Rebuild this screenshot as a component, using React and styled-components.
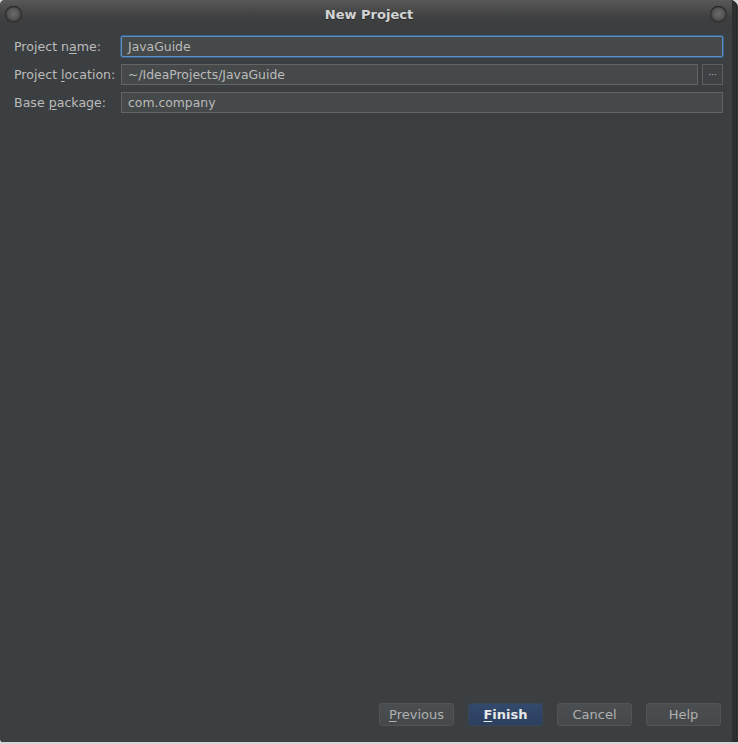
import React from 'react';
import styled, { createGlobalStyle } from 'styled-components';

const GlobalStyle = createGlobalStyle`
  html, body {
    margin: 0;
    padding: 0;
    background: #d6d6d6;
  }
  body {
    font-family: "DejaVu Sans", "Liberation Sans", sans-serif;
  }
`;

const Window = styled.div`
  width: 736px;
  height: 742px;
  background: #3c3f41;
  border-radius: 5px 5px 3px 3px;
  box-shadow: 1px 1px 0 #2a2a2a, 2px 2px 0 #333;
  display: flex;
  flex-direction: column;
  overflow: hidden;
  border-right: 4px solid #2d2f30;
  box-sizing: border-box;
`;

const TitleBar = styled.div`
  height: 28px;
  flex: none;
  display: flex;
  align-items: center;
  justify-content: space-between;
  padding: 0 5px;
  background: linear-gradient(#585858, #3f4041 60%, #3b3c3d);
  box-sizing: border-box;
`;

const Title = styled.div`
  color: #d4d4d4;
  font-size: 13px;
  font-weight: bold;
  text-shadow: 0 1px 0 #2a2a2a;
  margin-left: 6px;
`;

const Knob = styled.div`
  width: 17px;
  height: 17px;
  border-radius: 50%;
  background: radial-gradient(circle at 50% 45%, #6a6a6a 0, #555 45%, #3a3a3a 60%, #2e2e2e 75%, #555 100%);
  box-shadow: inset 0 1px 1px #222;
`;

const Body = styled.div`
  flex: 1;
  display: flex;
  flex-direction: column;
  justify-content: space-between;
  padding: 8px 9px 16px 14px;
`;

const Form = styled.div`
  display: grid;
  grid-template-columns: 107px 1fr;
  row-gap: 7px;
  align-items: center;
`;

const Label = styled.label`
  color: #bbbbbb;
  font-size: 12.6px;
  line-height: 21px;

  u {
    text-decoration: underline;
    text-underline-offset: 2px;
  }
`;

const FieldRow = styled.div`
  display: flex;
  gap: 4px;
`;

const Input = styled.div`
  flex: 1;
  height: 21px;
  box-sizing: border-box;
  background: #45494a;
  border: 1px solid ${({ $focused }) => ($focused ? '#5b8fc7' : '#646464')};
  box-shadow: ${({ $focused }) => ($focused ? '0 0 0 1px #3d6185' : 'none')};
  border-radius: ${({ $focused }) => ($focused ? '2px' : '0')};
  color: #bbbbbb;
  font-size: 12.4px;
  line-height: 19px;
  padding: 0 6px;
`;

const Browse = styled.div`
  width: 21px;
  height: 21px;
  box-sizing: border-box;
  border: 1px solid #5e6060;
  background: #3f4244;
  color: #bbbbbb;
  font-size: 9px;
  display: flex;
  align-items: center;
  justify-content: center;
`;

const Buttons = styled.div`
  display: flex;
  justify-content: flex-end;
  gap: 14px;
  padding-right: 2px;
`;

const Button = styled.div`
  width: 75px;
  height: 23px;
  box-sizing: border-box;
  border-radius: 3px;
  border: 1px solid ${({ $primary }) => ($primary ? '#38465a' : '#525557')};
  background: ${({ $primary }) =>
    $primary ? 'linear-gradient(#344a6c, #2b3f5e)' : 'linear-gradient(#4a4e50, #45494b)'};
  color: ${({ $primary }) => ($primary ? '#e8e8e8' : '#b0b0b0')};
  font-weight: ${({ $primary }) => ($primary ? 'bold' : 'normal')};
  font-size: 13px;
  display: flex;
  align-items: center;
  justify-content: center;

  u {
    text-underline-offset: 2px;
  }
`;

export default function App() {
  return (
    <>
      <GlobalStyle />
      <Window>
        <TitleBar>
          <Knob />
          <Title>New Project</Title>
          <Knob />
        </TitleBar>
        <Body>
          <Form>
            <Label>Project n<u>a</u>me:</Label>
            <FieldRow>
              <Input $focused>JavaGuide</Input>
            </FieldRow>
            <Label>Project <u>l</u>ocation:</Label>
            <FieldRow>
              <Input>~/IdeaProjects/JavaGuide</Input>
              <Browse>···</Browse>
            </FieldRow>
            <Label>Base <u>p</u>ackage:</Label>
            <FieldRow>
              <Input>com.company</Input>
            </FieldRow>
          </Form>
          <Buttons>
            <Button><span><u>P</u>revious</span></Button>
            <Button $primary><span><u>F</u>inish</span></Button>
            <Button>Cancel</Button>
            <Button>Help</Button>
          </Buttons>
        </Body>
      </Window>
    </>
  );
}
